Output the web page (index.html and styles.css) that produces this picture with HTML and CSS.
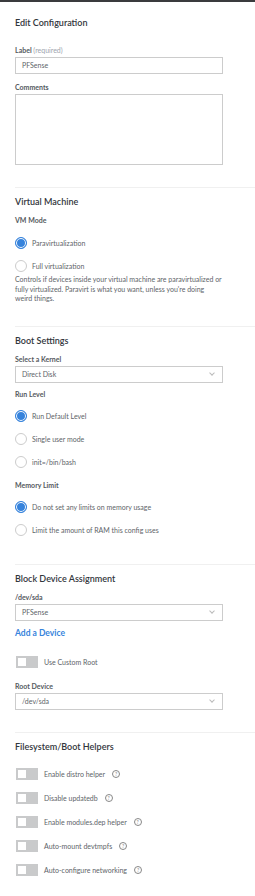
FILE: index.html
```html
<!DOCTYPE html>
<html lang="en">
  <head>
    <meta charset="UTF-8" />
    <meta name="viewport" content="width=device-width, initial-scale=1.0" />
    <title>Edit Configuration</title>
    <link rel="stylesheet" href="styles.css">
  </head>
  <body>
    <div class="topbar"></div>
    <div class="panel">
      <div class="section first">
        <h2 class="title">Edit Configuration</h2>
        <div class="label">Label <span class="req">(required)</span></div>
        <div class="field">PFSense</div>
        <div class="label wide">Comments</div>
        <div class="textarea"></div>
      </div>

      <div class="section">
        <h3 class="title">Virtual Machine</h3>
        <div class="label sub">VM Mode</div>
        <div class="radios">
          <div class="radio on"><span class="dot"></span>Paravirtualization</div>
          <div class="radio"><span class="dot"></span>Full virtualization</div>
        </div>
        <p class="desc">Controls if devices inside your virtual machine are paravirtualized or fully virtualized. Paravirt is what you want, unless you're doing weird things.</p>
      </div>

      <div class="section">
        <h3 class="title">Boot Settings</h3>
        <div class="label sub">Select a Kernel</div>
        <div class="field select">Direct Disk <span class="chev"></span></div>
        <div class="label gap">Run Level</div>
        <div class="radios">
          <div class="radio on"><span class="dot"></span>Run Default Level</div>
          <div class="radio"><span class="dot"></span>Single user mode</div>
          <div class="radio"><span class="dot"></span>init=/bin/bash</div>
        </div>
        <div class="label gap">Memory Limit</div>
        <div class="radios">
          <div class="radio on"><span class="dot"></span>Do not set any limits on memory usage</div>
          <div class="radio"><span class="dot"></span>Limit the amount of RAM this config uses</div>
        </div>
      </div>

      <div class="section">
        <h3 class="title">Block Device Assignment</h3>
        <div class="label sub">/dev/sda</div>
        <div class="field select">PFSense <span class="chev"></span></div>
        <a class="add" href="#">Add a Device</a>
        <div class="toggle single"><span class="switch"></span>Use Custom Root</div>
        <div class="label root">Root Device</div>
        <div class="field select">/dev/sda <span class="chev"></span></div>
      </div>

      <div class="section last">
        <h3 class="title">Filesystem/Boot Helpers</h3>
        <div class="toggles">
          <div class="toggle"><span class="switch"></span>Enable distro helper <span class="help">?</span></div>
          <div class="toggle"><span class="switch"></span>Disable updatedb <span class="help">?</span></div>
          <div class="toggle"><span class="switch"></span>Enable modules.dep helper <span class="help">?</span></div>
          <div class="toggle"><span class="switch"></span>Auto-mount devtmpfs <span class="help">?</span></div>
          <div class="toggle"><span class="switch"></span>Auto-configure networking <span class="help">?</span></div>
        </div>
      </div>
    </div>
  </body>
</html>
```

FILE: styles.css
```css
* {
  margin: 0;
  padding: 0;
  box-sizing: border-box;
}

body {
  font-family: Lato, "Open Sans", sans-serif;
  font-size: 7px;
  color: #606469;
  background: white;
}

.topbar {
  height: 2px;
  background: #3a3b3d;
}

.panel {
  padding-left: 15px;

  .section {
    border-top: 1px solid #f0f0f0;
    padding: 8px 0 22px;

    &.first {
      border-top: none;
      padding-top: 15px;
    }

    &.last {
      padding-bottom: 13px;
    }
  }

  .title {
    font-size: 9px;
    line-height: 12px;
    font-weight: 600;
    color: #32363c;
  }

  .label {
    font-weight: 700;
    line-height: 10px;
    margin-top: 16px;
    color: #55595e;

    .req {
      font-weight: 400;
      color: #9ea4ae;
    }

    &.wide {
      margin-top: 8px;
    }

    &.gap {
      margin-top: 6px;
    }

    &.sub {
      margin-top: 7px;
    }

    &.root {
      margin-top: 13px;
    }
  }

  .field {
    width: 208px;
    height: 17px;
    margin-top: 2px;
    border: 1px solid #ccc;
    padding-left: 6px;
    line-height: 15px;
    color: #606469;
    position: relative;

    .chev {
      position: absolute;
      right: 8px;
      top: 4px;
      width: 4px;
      height: 4px;
      border-right: 1px solid #bbb;
      border-bottom: 1px solid #bbb;
      transform: rotate(45deg);
    }
  }

  .textarea {
    width: 208px;
    height: 71px;
    margin-top: 2px;
    border: 1px solid #ccc;
  }

  .radios {
    margin-top: 6px;

    .radio {
      height: 23px;
      display: flex;
      align-items: center;
      gap: 5px;

      .dot {
        width: 12px;
        height: 12px;
        border-radius: 50%;
        border: 1px solid #ccc;
      }

      &.on .dot {
        border-color: #3683dc;
        background: #3683dc;
        box-shadow: inset 0 0 0 1px white;
      }
    }
  }

  .desc {
    line-height: 9.6px;
    margin-top: -2px;
    width: 208px;
  }

  .add {
    display: block;
    margin-top: 6px;
    font-size: 8.5px;
    line-height: 12px;
    font-weight: 700;
    color: #3683dc;
    text-decoration: none;
  }

  .toggle {
    display: flex;
    align-items: center;
    height: 24px;

    &.single {
      height: 12px;
      margin-top: 17px;
    }

    .switch {
      width: 22px;
      height: 12px;
      margin: 0 6px 0 1px;
      background: #c9cacb;
      position: relative;

      &::after {
        content: "";
        position: absolute;
        left: 2px;
        top: 2px;
        width: 8px;
        height: 8px;
        background: white;
      }
    }

    .help {
      width: 8px;
      height: 8px;
      margin-left: 7px;
      border: 1px solid #888;
      border-radius: 50%;
      font-size: 5px;
      line-height: 6px;
      text-align: center;
      color: #888;
    }
  }

  .toggles {
    margin-top: 9px;
  }
}
```
